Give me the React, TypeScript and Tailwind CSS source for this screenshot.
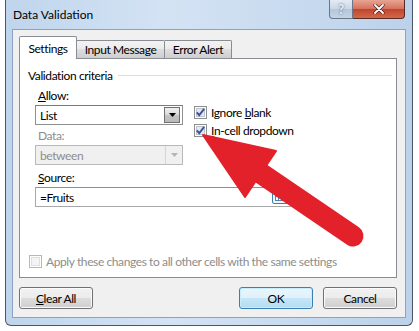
import clsx from "clsx";

type CheckProps = { checked?: boolean; disabled?: boolean };

const CheckBox = ({ checked, disabled }: CheckProps) => (
  <svg width="13" height="13" viewBox="0 0 13 13" className="shrink-0">
    <rect x="0.5" y="0.5" width="12" height="12" fill="#fdfdfd" stroke={disabled ? "#b8b8b8" : "#8e8f8f"} />
    <rect
      x="2.5"
      y="2.5"
      width="8"
      height="8"
      fill={disabled ? "#f4f4f4" : "#e4e8ee"}
      stroke={disabled ? "#e0e0e0" : "#bfc5cf"}
    />
    {checked && (
      <path d="M2.8 6.4 L5.2 9.2 L10.2 2.8" fill="none" stroke="#3b539b" strokeWidth="1.9" />
    )}
  </svg>
);

const DownTri = ({ color }: { color: string }) => (
  <svg width="7" height="4" viewBox="0 0 7 4">
    <path d="M0 0 H7 L3.5 4 Z" fill={color} />
  </svg>
);

const Btn = ({ children, primary }: { children: React.ReactNode; primary?: boolean }) => (
  <div
    className={clsx(
      "h-[22px] w-[74px] rounded-[3px] border flex items-center justify-center text-black",
      primary
        ? "border-[#3c7fb1] bg-[linear-gradient(#eaf6fd,#dff1fb_50%,#c6e6f7_50%,#b3dcf2)] shadow-[inset_0_0_0_1px_#c8ecfb]"
        : "border-[#707070] bg-[linear-gradient(#f2f2f2,#ebebeb_50%,#dddddd_50%,#cfcfcf)] shadow-[inset_0_0_0_1px_#fbfbfb]"
    )}
  >
    {children}
  </div>
);

export default function App() {
  return (
    <div className="relative w-[419px] h-[331px] bg-white overflow-hidden font-['Lato',sans-serif] text-[12px] leading-[15px] tracking-[-0.4px] text-black">
      {/* window frame */}
      <div className="ml-[5px] w-[408px] h-[326px] border-x border-b border-[#4b5563] rounded-b-[6px] bg-[linear-gradient(90deg,#bfd5ec,#d4e3f4_40%,#c6d9ee_75%,#bcd2ea)] flex flex-col px-[6px] pb-[7px]">
        {/* title bar */}
        <div className="h-[29px] flex items-start justify-between shrink-0">
          <span className="mt-[7px] pl-[1px] leading-[16px] tracking-normal">Data Validation</span>
          <div className="flex mr-[1px]">
            <div className="w-[24px] h-[19px] border border-t-0 border-[#6b7788] rounded-bl-[4px] bg-[linear-gradient(#e3ebf4,#c9d6e5_50%,#b5c6da_50%,#c4d4e6)] flex items-center justify-center text-[#eef3f9] font-bold text-[13px] [text-shadow:0_0_2px_#3e4a5c]">
              ?
            </div>
            <div className="w-[52px] h-[19px] border border-t-0 border-l-0 border-[#5a2a25] rounded-br-[4px] bg-[linear-gradient(#e8a493,#d7705c_50%,#c2432c_50%,#d06a4c)] flex items-center justify-center">
              <svg width="12" height="10" viewBox="0 0 12 10">
                <path d="M2 1 L10 9 M10 1 L2 9" stroke="#4a2020" strokeWidth="3.2" strokeLinecap="round" />
                <path d="M2 1 L10 9 M10 1 L2 9" stroke="#ffffff" strokeWidth="1.8" strokeLinecap="round" />
              </svg>
            </div>
          </div>
        </div>

        {/* client area */}
        <div className="flex-1 bg-[#f0f0f0] border border-[#8ba3bf] flex flex-col pl-[6px] pr-[8px] pt-[6px]">
          {/* tabs */}
          <div className="flex items-end h-[22px] relative z-10">
            <div className="w-[58px] h-[23px] -mb-[1px] bg-white border border-b-0 border-[#898c95] rounded-t-[2px] flex items-center justify-center">
              Settings
            </div>
            <div className="w-[88px] h-[18px] border-t border-r border-[#898c95] rounded-tr-[2px] bg-[linear-gradient(#f2f2f2,#ebebeb_50%,#dddddd_50%,#cfcfcf)] flex items-center justify-center">
              Input Message
            </div>
            <div className="w-[67px] h-[18px] border-t border-r border-[#898c95] rounded-tr-[2px] bg-[linear-gradient(#f2f2f2,#ebebeb_50%,#dddddd_50%,#cfcfcf)] flex items-center justify-center">
              Error Alert
            </div>
          </div>

          {/* tab panel */}
          <div className="h-[220px] bg-white border border-[#898c95] flex flex-col pl-[8px] pr-[4px] pt-[9px] pb-[9px]">
            <div className="flex items-center">
              <span>Validation criteria</span>
              <div className="flex-1 h-px bg-[#d5dfe5] ml-[6px]" />
            </div>

            <div className="flex pl-[7px]">
              <div className="w-[148px] flex flex-col">
                <div className="mt-[5px] pl-[3px]">
                  <u>A</u>llow:
                </div>
                <div className="mt-[2px] h-[20px] border border-[#8e8f8f] border-t-[#7a7a7a] bg-white flex items-center justify-between pl-[4px] pr-[2px]">
                  <span>List</span>
                  <div className="w-[16px] h-[16px] border border-[#707070] bg-[linear-gradient(#f0f0f0,#d8d8d8_50%,#c4c4c4_50%,#b9b9b9)] flex items-center justify-center">
                    <DownTri color="#000" />
                  </div>
                </div>
                <div className="mt-[3px] pl-[3px] text-[#8d8d8d]">Data:</div>
                <div className="mt-[2px] h-[20px] border border-[#b9b9b9] bg-[#f0f0f0] flex items-center justify-between pl-[4px]">
                  <span className="text-[#8d8d8d]">between</span>
                  <div className="w-[17px] h-full border-l border-[#d6d6d6] flex items-center justify-center">
                    <DownTri color="#b4b4b4" />
                  </div>
                </div>
              </div>

              <div className="ml-[11px] pt-[21px] flex flex-col gap-[2px]">
                <div className="h-[16px] flex items-center gap-[4px]">
                  <CheckBox checked />
                  <span>
                    Ignore <u>b</u>lank
                  </span>
                </div>
                <div className="h-[16px] flex items-center gap-[4px]">
                  <CheckBox checked />
                  <span>
                    <u>I</u>n-cell dropdown
                  </span>
                </div>
              </div>
            </div>

            <div className="pl-[7px] flex flex-col">
              <div className="mt-[5px] pl-[3px]">
                <u>S</u>ource:
              </div>
              <div className="mt-[2px] w-[256px] h-[20px] border border-[#a8a8a8] border-t-[#8e8f8f] bg-white flex items-center justify-between pl-[4px] pr-[1px]">
                <span>=Fruits</span>
                <div className="w-[17px] h-[14px] border border-[#3f7fa7] rounded-[2px] bg-[#eef6fb] flex items-center justify-center">
                  <svg width="11" height="8" viewBox="0 0 11 8">
                    <rect x="0.5" y="0.5" width="10" height="7" fill="#fff" stroke="#4b86b0" />
                    <path d="M0.5 3.5 H10.5 M3.5 0.5 V7.5 M7 0.5 V7.5" stroke="#4b86b0" />
                  </svg>
                </div>
              </div>
            </div>

            <div className="mt-auto ml-[1px] h-[14px] flex items-center gap-[4px] text-[#8d8d8d]">
              <CheckBox disabled />
              <span>Apply these changes to all other cells with the same settings</span>
            </div>
          </div>

          {/* buttons */}
          <div className="mt-[9px] flex items-center">
            <Btn>
              <span>
                <u>C</u>lear All
              </span>
            </Btn>
            <div className="flex-1" />
            <Btn primary>OK</Btn>
            <div className="w-[10px]" />
            <Btn>Cancel</Btn>
          </div>
        </div>
      </div>

      {/* red annotation arrow */}
      <svg className="absolute left-0 top-0 pointer-events-none" width="419" height="331" viewBox="0 0 419 331">
        <line x1="256" y1="170" x2="353" y2="236" stroke="#e3212b" strokeWidth="21" strokeLinecap="round" />
        <polygon points="203,135 276,151 245,197" fill="#e3212b" stroke="#e3212b" strokeWidth="2" strokeLinejoin="round" />
      </svg>
    </div>
  );
}
